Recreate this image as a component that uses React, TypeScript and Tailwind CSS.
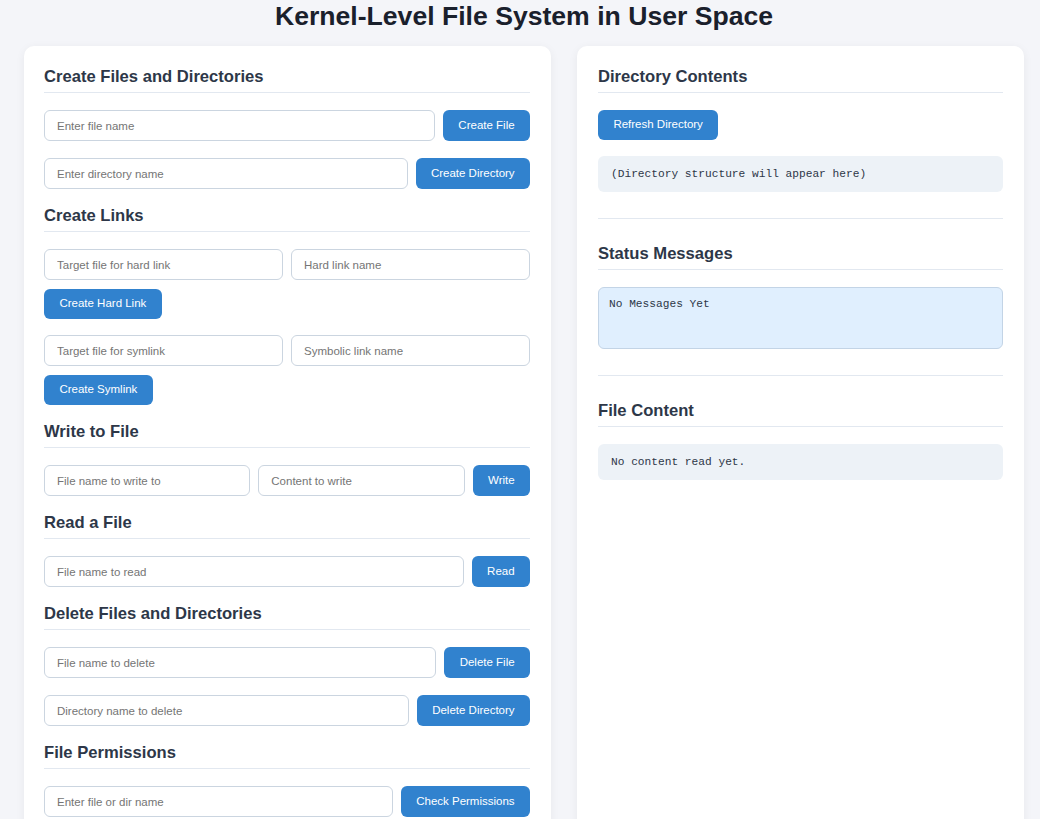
import React from "react";

// 공통 스타일
const inputCls =
  "flex-1 min-w-0 h-[31px] px-3 rounded-md border border-[#cbd5e0] bg-white text-[11.5px] text-[#2d3748] placeholder:text-[#757575] outline-none";
const btnBase =
  "shrink-0 px-[15.4px] rounded-md bg-[#3182ce] text-white text-[11.5px] whitespace-nowrap";
const btnCls = btnBase + " h-[31px]";
const btnSmCls = btnBase + " h-[30px]";
const monoCls = "text-[11.2px] text-[#2d3748] font-['Liberation_Mono',monospace]";

function Heading({ children, first }: { children: React.ReactNode; first?: boolean }) {
  return (
    <h2
      className={
        "text-[16.6px] leading-[20px] font-bold text-[#2d3748] pt-px pb-[5px] border-b border-[#e2e8f0] mb-[17px] " +
        (first ? "" : "mt-4")
      }
    >
      {children}
    </h2>
  );
}

function Row({
  placeholders,
  button,
  gapTop,
}: {
  placeholders: string[];
  button: string;
  gapTop?: boolean;
}) {
  return (
    <div className={"flex gap-2 " + (gapTop ? "mt-[17px]" : "")}>
      {placeholders.map((p) => (
        <input key={p} className={inputCls} placeholder={p} />
      ))}
      <button className={btnCls}>{button}</button>
    </div>
  );
}

function LinkGroup({ a, b, button }: { a: string; b: string; button: string }) {
  return (
    <div className="flex flex-col gap-[9px] items-start">
      <div className="flex gap-2 w-full">
        <input className={inputCls} placeholder={a} />
        <input className={inputCls} placeholder={b} />
      </div>
      <button className={btnSmCls}>{button}</button>
    </div>
  );
}

export default function App() {
  return (
    <div className="min-h-screen bg-[#f4f5f9] pl-6 pr-4 pt-px font-['Liberation_Sans',Arial,sans-serif]">
      <h1 className="text-center text-[26.6px] leading-[30px] font-bold text-[#1a202c] mb-[15px]">
        Kernel-Level File System in User Space
      </h1>

      <div className="flex gap-[26px]">
        {/* 왼쪽: 작업 패널 */}
        <div className="w-[527px] shrink-0 bg-white rounded-[10px] shadow-[0_2px_10px_rgba(0,0,0,0.06)] pl-5 pr-[21px] py-5">
          <Heading first>Create Files and Directories</Heading>
          <Row placeholders={["Enter file name"]} button="Create File" />
          <Row placeholders={["Enter directory name"]} button="Create Directory" gapTop />

          <Heading>Create Links</Heading>
          <LinkGroup a="Target file for hard link" b="Hard link name" button="Create Hard Link" />
          <div className="mt-4">
            <LinkGroup a="Target file for symlink" b="Symbolic link name" button="Create Symlink" />
          </div>

          <Heading>Write to File</Heading>
          <Row placeholders={["File name to write to", "Content to write"]} button="Write" />

          <Heading>Read a File</Heading>
          <Row placeholders={["File name to read"]} button="Read" />

          <Heading>Delete Files and Directories</Heading>
          <Row placeholders={["File name to delete"]} button="Delete File" />
          <Row placeholders={["Directory name to delete"]} button="Delete Directory" gapTop />

          <Heading>File Permissions</Heading>
          <Row placeholders={["Enter file or dir name"]} button="Check Permissions" />
        </div>

        {/* 오른쪽: 출력 패널 */}
        <div className="w-[447px] shrink-0 bg-white rounded-[10px] shadow-[0_2px_10px_rgba(0,0,0,0.06)] px-[21px] py-5">
          <Heading first>Directory Contents</Heading>
          <button className={btnSmCls}>Refresh Directory</button>
          <pre className={"mt-4 h-[36px] flex items-center px-[13px] rounded-md bg-[#edf2f7] " + monoCls}>
            (Directory structure will appear here)
          </pre>

          <hr className="mt-[26px] mb-6 border-[#e2e8f0]" />

          <Heading first>Status Messages</Heading>
          <div className={"h-[62px] pt-2 px-[10px] rounded-md bg-[#e0effe] border border-[#c3d4e6] " + monoCls}>
            No Messages Yet
          </div>

          <hr className="mt-[26px] mb-6 border-[#e2e8f0]" />

          <Heading first>File Content</Heading>
          <pre className={"h-[36px] flex items-center px-[13px] rounded-md bg-[#edf2f7] " + monoCls}>
            No content read yet.
          </pre>
        </div>
      </div>
    </div>
  );
}
